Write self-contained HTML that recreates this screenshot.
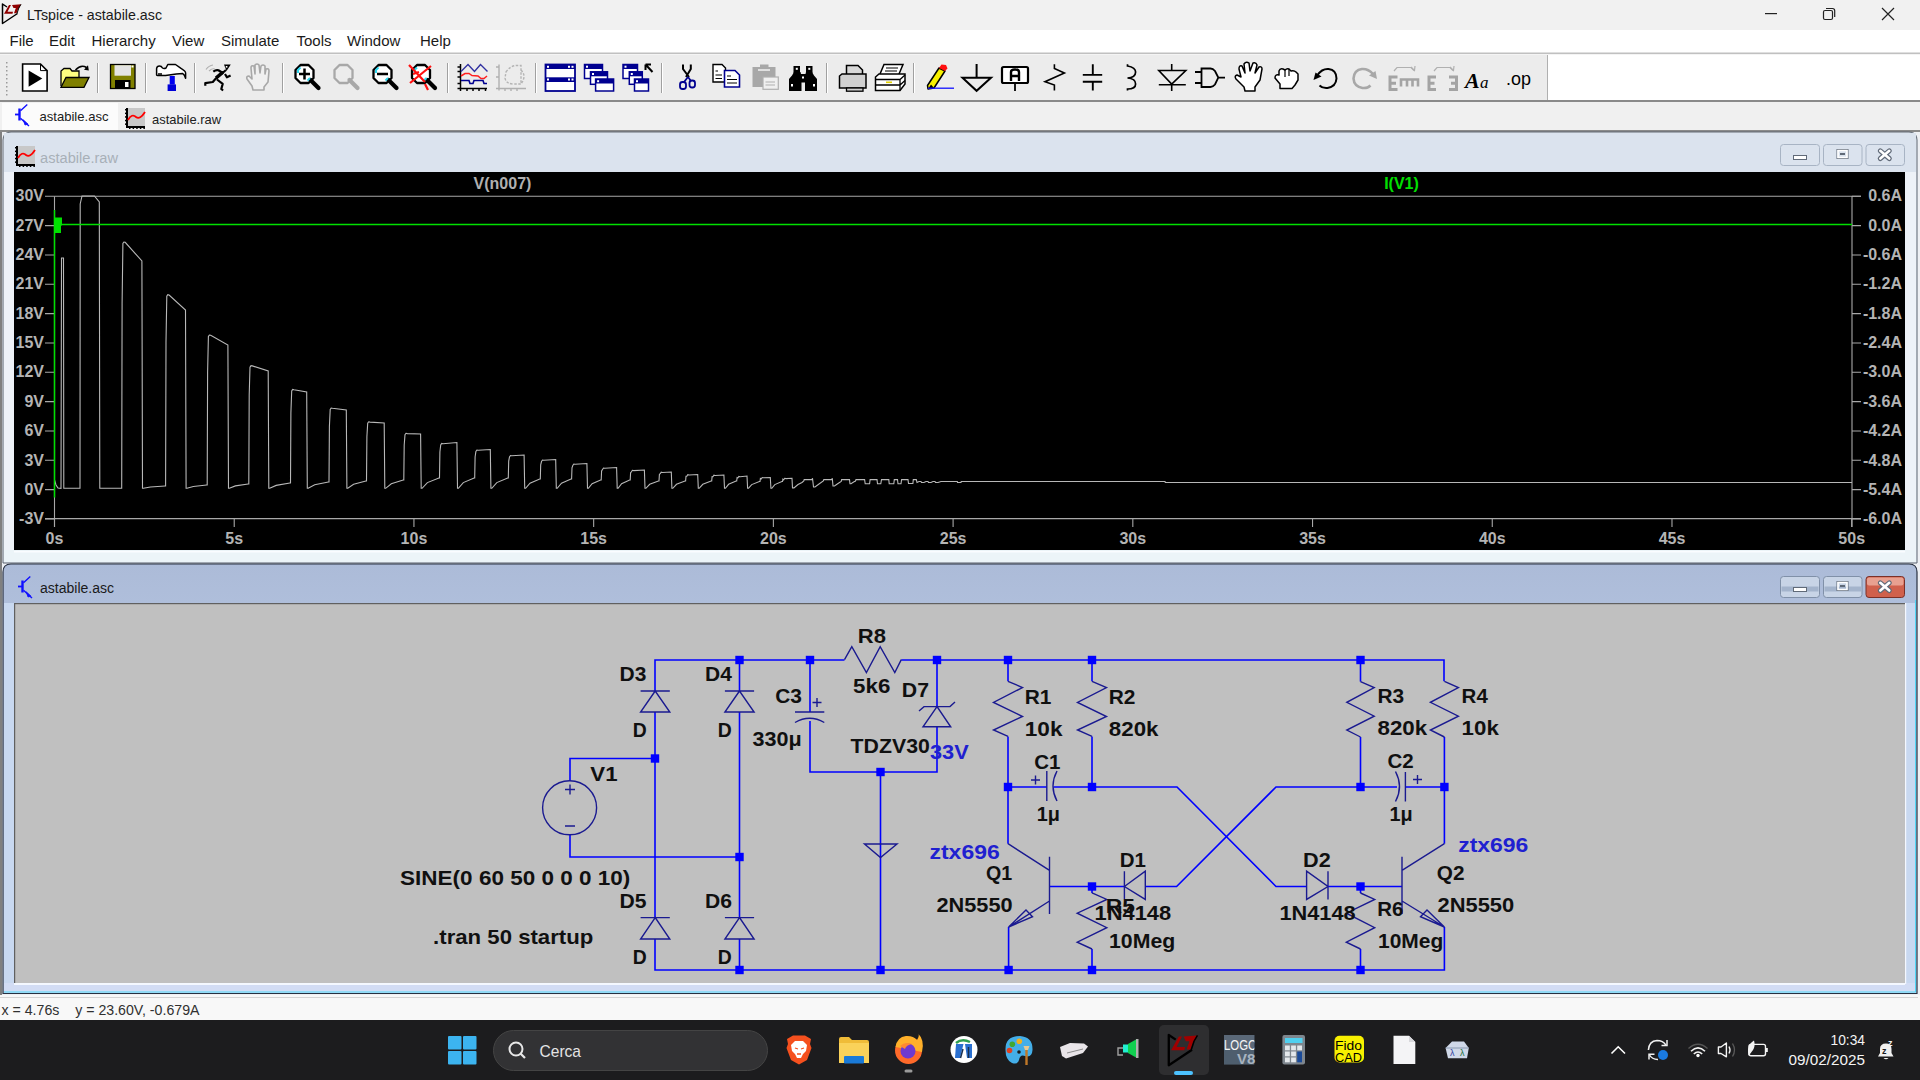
<!DOCTYPE html>
<html><head><meta charset="utf-8"><title>LTspice - astabile.asc</title>
<style>html,body{margin:0;padding:0;background:#1c1c1e;overflow:hidden}svg{display:block}text{font-family:"Liberation Sans", sans-serif;white-space:pre}</style></head>
<body><svg width="1920" height="1080" viewBox="0 0 1920 1080" font-family='"Liberation Sans", sans-serif'>
<rect x="0" y="0" width="1920" height="30" fill="#f1f1f1"/>
<rect x="0" y="30" width="1920" height="23" fill="#ffffff"/>
<rect x="0" y="52.5" width="1920" height="1.6" fill="#c0c0c0"/><rect x="0" y="54" width="1920" height="1" fill="#f4f4f4"/>
<rect x="0" y="55" width="1548" height="46" fill="#ececec"/>
<rect x="1548" y="55" width="372" height="46" fill="#ffffff"/>
<rect x="1547" y="55" width="1" height="46" fill="#b0b0b0"/>
<rect x="0" y="100" width="1920" height="2" fill="#8a8a8a"/>
<rect x="0" y="102" width="1920" height="29" fill="#f0f0f0"/>
<rect x="2" y="103" width="116" height="28" fill="#fbfbfb"/>
<rect x="0" y="131" width="1920" height="865" fill="#eef0f4"/>
<rect x="0" y="131" width="2" height="865" fill="#808080"/>
<rect x="0" y="130" width="1920" height="2" fill="#8a8a8a"/>
<g><path d="M7,7 L2.5,4 L2.5,23.5 L17.5,13.5" fill="none" stroke="#000" stroke-width="1.5" stroke-linejoin="round"/><path d="M9,5 L11,5 L7.5,11.8 L13,11.8 L12.5,13.8 L4,13.8 Z" fill="#900000"/><path d="M12,5 L21,4.3 L19.3,7.8 L18.5,8 L16.5,13.3 L14,13.3 L15.8,8 L13.5,8 Z" fill="#900000"/><path d="M21,4.3 L18.8,8 L17,13.5" fill="none" stroke="#000" stroke-width="1"/></g>
<text x="27" y="20" font-size="15" fill="#1a1a1a" font-weight="400" text-anchor="start" textLength="135" lengthAdjust="spacingAndGlyphs" >LTspice - astabile.asc</text>
<rect x="1765" y="13" width="12" height="1.2" fill="#222"/>
<rect x="1823.5" y="10.5" width="9" height="9" rx="1.5" fill="none" stroke="#222" stroke-width="1.2"/><path d="M1826,8.5 L1832.5,8.5 Q1834.7,8.5 1834.7,10.7 L1834.7,17" fill="none" stroke="#222" stroke-width="1.2"/>
<path d="M1882,8 L1894,20 M1894,8 L1882,20" stroke="#222" stroke-width="1.2"/>
<text x="9.5" y="45.8" font-size="15" fill="#1a1a1a" font-weight="400" text-anchor="start" >File</text>
<text x="49" y="45.8" font-size="15" fill="#1a1a1a" font-weight="400" text-anchor="start" >Edit</text>
<text x="91.5" y="45.8" font-size="15" fill="#1a1a1a" font-weight="400" text-anchor="start" >Hierarchy</text>
<text x="172" y="45.8" font-size="15" fill="#1a1a1a" font-weight="400" text-anchor="start" >View</text>
<text x="221" y="45.8" font-size="15" fill="#1a1a1a" font-weight="400" text-anchor="start" >Simulate</text>
<text x="296.5" y="45.8" font-size="15" fill="#1a1a1a" font-weight="400" text-anchor="start" >Tools</text>
<text x="347" y="45.8" font-size="15" fill="#1a1a1a" font-weight="400" text-anchor="start" >Window</text>
<text x="420" y="45.8" font-size="15" fill="#1a1a1a" font-weight="400" text-anchor="start" >Help</text>
<g><rect x="6" y="62" width="1.5" height="1.5" fill="#9a9a9a"/><rect x="6" y="66" width="1.5" height="1.5" fill="#9a9a9a"/><rect x="6" y="70" width="1.5" height="1.5" fill="#9a9a9a"/><rect x="6" y="74" width="1.5" height="1.5" fill="#9a9a9a"/><rect x="6" y="78" width="1.5" height="1.5" fill="#9a9a9a"/><rect x="6" y="82" width="1.5" height="1.5" fill="#9a9a9a"/><rect x="6" y="86" width="1.5" height="1.5" fill="#9a9a9a"/><rect x="6" y="90" width="1.5" height="1.5" fill="#9a9a9a"/><rect x="6" y="94" width="1.5" height="1.5" fill="#9a9a9a"/><rect x="97" y="63" width="1" height="30" fill="#a0a0a0"/><rect x="98" y="63" width="1" height="30" fill="#fff"/><rect x="145" y="63" width="1" height="30" fill="#a0a0a0"/><rect x="146" y="63" width="1" height="30" fill="#fff"/><rect x="194" y="63" width="1" height="30" fill="#a0a0a0"/><rect x="195" y="63" width="1" height="30" fill="#fff"/><rect x="282" y="63" width="1" height="30" fill="#a0a0a0"/><rect x="283" y="63" width="1" height="30" fill="#fff"/><rect x="447" y="63" width="1" height="30" fill="#a0a0a0"/><rect x="448" y="63" width="1" height="30" fill="#fff"/><rect x="535" y="63" width="1" height="30" fill="#a0a0a0"/><rect x="536" y="63" width="1" height="30" fill="#fff"/><rect x="661" y="63" width="1" height="30" fill="#a0a0a0"/><rect x="662" y="63" width="1" height="30" fill="#fff"/><rect x="826" y="63" width="1" height="30" fill="#a0a0a0"/><rect x="827" y="63" width="1" height="30" fill="#fff"/><rect x="913" y="63" width="1" height="30" fill="#a0a0a0"/><rect x="914" y="63" width="1" height="30" fill="#fff"/><path d="M22.6,64 L40.5,64 L47.1,70.6 L47.1,91 L22.6,91 Z" fill="#fff" stroke="#000" stroke-width="1.6"/><path d="M40.5,64 L40.5,70.6 L47.1,70.6" fill="none" stroke="#000" stroke-width="1"/><path d="M28.6,70.6 L28.6,86.7 L42.3,78.6 Z" fill="#000"/><path d="M61,86 L61,71 L64,68.5 L70,68.5 L72,71 L79,71 L79,77" fill="#ffff80" stroke="#000" stroke-width="1.3"/><path d="M61,87.3 L66,77.5 L89,77.5 L84,87.3 Z" fill="#808000" stroke="#000" stroke-width="1.3"/><path d="M75.5,70 Q81,64 86.5,67.5" fill="none" stroke="#000" stroke-width="1.6"/><path d="M84,69.8 L88.8,70.5 L88,65.2 Z" fill="#000"/><rect x="110.5" y="64.5" width="24.5" height="24" fill="#808000" stroke="#000" stroke-width="1.3"/><rect x="114.5" y="65.2" width="16.5" height="10.5" fill="#e4e4e4"/><rect x="131.5" y="65.5" width="2" height="2" fill="#fff"/><rect x="115" y="80" width="15.5" height="8.5" fill="#000"/><rect x="125" y="82" width="3.5" height="5" fill="#fff"/><path d="M156.6,75 L156.6,68.5 Q157,66 159.4,66 Q161.5,66 162.5,68 Q164,69 166,68 L167.8,64.5 L175.5,64.5 L181,68.4 Q185.6,71 185.6,73 L185.6,78.3 Q184.5,74.5 182.8,73.6 L176.3,74 L165.5,75.5 L159,75.5 Q156.6,75.5 156.6,75 Z" fill="#fff" stroke="#000" stroke-width="1.5" stroke-linejoin="round"/><path d="M158,74 L162,74" stroke="#000" stroke-width="1.5"/><rect x="169.7" y="76" width="5.1" height="8.6" fill="#0000f0"/><rect x="167.6" y="84.4" width="8.4" height="6.6" fill="#0000d8"/><path d="M224,64.5 L230.8,64.5 L226.5,71 Z" fill="#000"/><rect x="225.8" y="66" width="1.6" height="1.6" fill="#fff"/><path d="M226,70 L215.6,78.8 M213.3,71.7 Q216,69.5 218.4,70.3 L223.5,73.5 M225,74 L226.9,77.3 L230.6,75.5 M215.6,78.8 L212.8,82 L205.3,83.2 L205.3,85.8 M217,79.5 L222.7,83.9 L221.3,89 L223.1,90.5" stroke="#000" stroke-width="2.2" fill="none" stroke-linejoin="round"/><path d="M216,78 L223,72" stroke="#000" stroke-width="3.5"/><path d="M206,69.5 Q209,65.5 213,65 M209,71 Q211.5,68.5 214.5,68.5" stroke="#b0b0b0" stroke-width="1.2" fill="none"/><path d="M253,90 L252,86 L247,79 Q246,76 249,76 L252,79 L251,68 Q251,65 254,66 L255,74 L255,65 Q257,63 259,65 L260,73 L261,66 Q263,64 265,66 L265,74 L266,69 Q269,68 269,71 L268,82 L264,87 L264,90 Z" fill="#f0f0f0" stroke="#a8a8a8" stroke-width="1.6" stroke-linejoin="round"/><path d="M300.5,65 L308.5,65 L313.5,70 L313.5,78 L308.5,83 L300.5,83 L295.5,78 L295.5,70 Z" fill="#fff" stroke="#000" stroke-width="2.3" stroke-linejoin="round"/><path d="M310.5,80 L318.5,88" stroke="#000" stroke-width="4.2" stroke-linecap="round"/><path d="M298.0,73 L298.0,70 L300.5,67.5" stroke="#30d8f0" stroke-width="2" fill="none"/><path d="M307.5,80.5 L310.0,78" stroke="#30d8f0" stroke-width="2"/><path d="M299,74 L310,74 M304.5,68.5 L304.5,79.5" stroke="#000" stroke-width="2.5"/><path d="M339.5,65 L347.5,65 L352.5,70 L352.5,78 L347.5,83 L339.5,83 L334.5,78 L334.5,70 Z" fill="#ececec" stroke="#a8a8a8" stroke-width="2.3" stroke-linejoin="round"/><path d="M349.5,80 L357.5,88" stroke="#a8a8a8" stroke-width="4.2" stroke-linecap="round"/><path d="M378.5,65 L386.5,65 L391.5,70 L391.5,78 L386.5,83 L378.5,83 L373.5,78 L373.5,70 Z" fill="#fff" stroke="#000" stroke-width="2.3" stroke-linejoin="round"/><path d="M388.5,80 L396.5,88" stroke="#000" stroke-width="4.2" stroke-linecap="round"/><path d="M376.0,73 L376.0,70 L378.5,67.5" stroke="#30d8f0" stroke-width="2" fill="none"/><path d="M385.5,80.5 L388.0,78" stroke="#30d8f0" stroke-width="2"/><path d="M377,74 L388,74" stroke="#000" stroke-width="2.5"/><path d="M417,65 L425,65 L430,70 L430,78 L425,83 L417,83 L412,78 L412,70 Z" fill="#fff" stroke="#000" stroke-width="2.3" stroke-linejoin="round"/><path d="M427,80 L435,88" stroke="#000" stroke-width="4.2" stroke-linecap="round"/><path d="M414.5,73 L414.5,70 L417,67.5" stroke="#30d8f0" stroke-width="2" fill="none"/><path d="M424,80.5 L426.5,78" stroke="#30d8f0" stroke-width="2"/><path d="M409,65 L425,82 M431,66 L410,83 M413,74 L419,72 M425,84 L428,90" stroke="#ff1010" stroke-width="2.2"/><path d="M460.5,64 L460.5,91 M457.5,88.5 L487,88.5 M457.5,67 L460.5,67 M457.5,71.5 L460.5,71.5 M457.5,77 L460.5,77 M457.5,83.5 L460.5,83.5 M467,88.5 L467,91 M473,88.5 L473,91 M479,88.5 L479,91 M485.5,88.5 L485.5,91" fill="none" stroke="#000" stroke-width="1.5"/><path d="M461,71.5 L468,64.5 L474.5,71.5 L480.5,64.5 L487.5,71.5" fill="none" stroke="#3030a0" stroke-width="1.4"/><path d="M461,76 L465,73.5 L469,73.5 L472,75.5 L478,76 L481,78.5 L484,78.5 L487,76" fill="none" stroke="#ff2020" stroke-width="1.5"/><path d="M461,80.5 L469,80.5 L470,83.5 L473,83.5 L474,80.5 L483,80.5 L484,83.5 L487,83.5" fill="none" stroke="#000090" stroke-width="1.6"/><path d="M499,64.5 L499,90.5 M496,88.5 L526,88.5 M496,67 L499,67 M496,77 L499,77 M505,88.5 L505,91 M511,88.5 L511,91 M517,88.5 L517,91" fill="none" stroke="#b0b0b0" stroke-width="1.4"/><path d="M506,72 Q510,66 516,65.5 L521,65.5 L521,84 L514,84 Q506,84 505,78 Z M521,70 Q527,76 521,84" fill="none" stroke="#b4b4b4" stroke-width="1.4" stroke-dasharray="2.5,1.5"/><rect x="545.5" y="64.5" width="29.5" height="26.5" fill="#fff" stroke="#000090" stroke-width="1.8"/><rect x="545.5" y="64.5" width="29.5" height="4.5" fill="#000090"/><rect x="545.5" y="77.3" width="29.5" height="4.7" fill="#000090"/><rect x="547" y="65.8" width="2" height="2" fill="#fff"/><rect x="568" y="65.8" width="2" height="2" fill="#fff"/><rect x="571.5" y="65.8" width="2" height="2" fill="#fff"/><rect x="547" y="78.5" width="2" height="2" fill="#fff"/><rect x="568" y="78.5" width="2" height="2" fill="#fff"/><rect x="571.5" y="78.5" width="2" height="2" fill="#fff"/><rect x="584.5" y="64.5" width="18" height="14" fill="#fff" stroke="#000090" stroke-width="1.5"/><rect x="584.5" y="64.5" width="18" height="4.5" fill="#000090"/><rect x="586.0" y="65.7" width="2" height="2" fill="#fff"/><rect x="590.5" y="71.8" width="17" height="12.5" fill="#fff" stroke="#000090" stroke-width="1.5"/><rect x="590.5" y="71.8" width="17" height="4.5" fill="#000090"/><rect x="592.0" y="73.0" width="2" height="2" fill="#fff"/><rect x="595.6" y="79" width="18" height="12" fill="#fff" stroke="#000090" stroke-width="1.5"/><rect x="595.6" y="79" width="18" height="4.5" fill="#000090"/><rect x="597.1" y="80.2" width="2" height="2" fill="#fff"/><rect x="623" y="64.5" width="14.5" height="14" fill="#fff" stroke="#000090" stroke-width="1.5"/><rect x="623" y="64.5" width="14.5" height="4.5" fill="#000090"/><rect x="624.5" y="65.7" width="2" height="2" fill="#fff"/><rect x="629.3" y="71.8" width="13" height="12.5" fill="#fff" stroke="#000090" stroke-width="1.5"/><rect x="629.3" y="71.8" width="13" height="4.5" fill="#000090"/><rect x="630.8" y="73.0" width="2" height="2" fill="#fff"/><rect x="634.5" y="79" width="14" height="12" fill="#fff" stroke="#000090" stroke-width="1.5"/><rect x="634.5" y="79" width="14" height="4.5" fill="#000090"/><rect x="636.0" y="80.2" width="2" height="2" fill="#fff"/><path d="M646,65 L652.5,72 M645.5,64.5 L645.5,70 M645.5,64.5 L651,64.5" fill="none" stroke="#000" stroke-width="2"/><path d="M683,64.5 L683,69 L689,77 M690.8,64.5 L690.8,69 L686,77" stroke="#000" stroke-width="2" fill="none"/><path d="M688,77 L684,82 M688,77 L691,81" stroke="#000090" stroke-width="1.8"/><rect x="680" y="82" width="6" height="7" rx="2.5" fill="none" stroke="#000090" stroke-width="1.8"/><rect x="689.5" y="80.5" width="5.5" height="7" rx="2.5" fill="none" stroke="#000090" stroke-width="1.8"/><path d="M713,64.5 L722,64.5 L725.5,68 L725.5,82 L713,82 Z" fill="#fff" stroke="#000" stroke-width="1.4"/><path d="M715.5,71 L718,71 M715.5,75 L722,75 M715.5,78.5 L722,78.5" stroke="#000" stroke-width="1.1"/><path d="M724.5,70.5 L735,70.5 L739.5,75 L739.5,87 L724.5,87 Z" fill="#fff" stroke="#000090" stroke-width="1.6"/><path d="M727,76 L731,76 M727,79.5 L737,79.5 M727,83 L737,83" stroke="#000" stroke-width="1.1"/><rect x="752.5" y="67" width="23" height="20" fill="#a8a8a8"/><rect x="760" y="64.5" width="8.5" height="4" fill="#a8a8a8"/><rect x="758" y="69" width="12" height="2" fill="#e0e0e0"/><rect x="763" y="77" width="15.3" height="12.3" fill="#f0f0f0" stroke="#b0b0b0" stroke-width="1.2"/><path d="M765.5,82 L775,82 M765.5,85 L775,85" stroke="#b0b0b0" stroke-width="1"/><rect x="793.5" y="66" width="6.5" height="7" fill="#000"/><rect x="806" y="66" width="6.5" height="7" fill="#000"/><path d="M792,75.5 L794,72 L800.5,72 L801.5,76 L801.5,91 L789,91 L789,79 Z M805,76 L806,72 L812,72 L814,75.5 L817,79 L817,91 L805,91 Z" fill="#000"/><rect x="800" y="74" width="6" height="8.5" fill="#000"/><rect x="795.8" y="67.8" width="2" height="2" fill="#fff"/><rect x="808.3" y="67.8" width="2" height="2" fill="#fff"/><rect x="802" y="76.5" width="2" height="2" fill="#fff"/><rect x="791" y="84" width="2" height="2.5" fill="#fff"/><rect x="813" y="84" width="2" height="2.5" fill="#fff"/><path d="M846.5,74 L846.5,65.5 L858,65.5 L862.5,70 L862.5,74" fill="#d8d8d8" stroke="#000" stroke-width="1.5"/><path d="M839.5,88 L839.5,76 L842,74 L866,74 L866,88 Z" fill="#d0d0d0" stroke="#000" stroke-width="1.5"/><rect x="846.5" y="88" width="16.5" height="3.2" fill="#d0d0d0" stroke="#000" stroke-width="1.3"/><path d="M880,74 L884,64.5 L903,64.5 L899,74" fill="#fff" stroke="#000" stroke-width="1.5"/><path d="M886,68 L898,68 M885,71 L897,71" stroke="#000" stroke-width="1.2"/><path d="M875.5,90.5 L875.5,77 L879,74 L905,74 L905,84 L900,90.5 Z" fill="#fff" stroke="#000" stroke-width="1.5"/><path d="M875.5,79.5 L900,79.5 L905,75 M875.5,85 L900,85 L905,80.5 M900,79.5 L900,90.5" fill="none" stroke="#000" stroke-width="1.3"/><rect x="886" y="81.5" width="6" height="1.6" fill="#e0d000"/><path d="M927.5,85.5 L939,68 L945,71 L934,88 L928,89 Z" fill="#f8f000" stroke="#000" stroke-width="1.5" stroke-linejoin="round"/><path d="M939,68 L941.5,64.5 L946,65 L947.5,68.5 L945,71 Z" fill="#ff1010"/><path d="M928,89 L931,84.5 L934,88 Z" fill="#000"/><path d="M928,88.2 L954,88.2" stroke="#1010ff" stroke-width="1.3"/><path d="M976.6,64 L976.6,77.7 M962.5,77.7 L991,77.7 L976.6,90.8 Z" fill="none" stroke="#000" stroke-width="2"/><rect x="1002" y="67" width="26" height="16" rx="1.5" fill="#fff" stroke="#000" stroke-width="2.2"/><path d="M1015,83 L1015,91" stroke="#000" stroke-width="1.8"/><path d="M1011,81 L1011,72 Q1011,69.5 1015,69.5 Q1019,69.5 1019,72 L1019,81 M1011,76 L1019,76" fill="none" stroke="#000" stroke-width="2.4"/><path d="M1054.4,64.2 L1054.4,68.5 L1064.4,73 L1045,81.7 L1054.4,85 L1054.4,90.5" fill="none" stroke="#000" stroke-width="1.6"/><path d="M1092.8,64.2 L1092.8,74.9 M1082.8,74.9 L1102.2,74.9 M1082.8,81.7 L1102.2,81.7 M1092.8,81.7 L1092.8,90.5" fill="none" stroke="#000" stroke-width="1.9"/><path d="M1127.5,64.2 L1127.5,66 Q1135.6,67.5 1135.6,72 Q1135.6,77.5 1127.5,78 Q1135.6,78.5 1135.6,84 Q1135.6,89 1127.5,89 L1127.5,90.5" fill="none" stroke="#000" stroke-width="1.7"/><path d="M1171.7,64 L1171.7,70.5 M1171.7,84.7 L1171.7,91 M1158.8,84.7 L1185.8,84.7 M1158.8,70.5 L1185.8,70.5 L1171.7,84 Z" fill="none" stroke="#000" stroke-width="1.6"/><path d="M1201.5,68.5 L1210.5,68.5 Q1213,68.5 1215,71 L1218.3,77.6 L1215,84.5 Q1213,87 1210.5,87 L1201.5,87 Z M1195,72 L1201.5,72 M1195,83 L1201.5,83 M1218.3,77.6 L1225,77.6" fill="none" stroke="#000" stroke-width="1.8"/><path d="M1245,91 L1244,87 L1236,79 Q1234,76 1237,75 L1241,77 L1239,69 Q1239,65 1242,66 L1245,73 L1244,64 Q1246,61 1249,63 L1250,71 L1253,63 Q1256,62 1257,65 L1255,73 L1259,67 Q1262,66 1262,69 L1260,80 L1255,87 L1255,91 Z" fill="#fff" stroke="#000" stroke-width="1.5" stroke-linejoin="round"/><path d="M1280,88.5 L1280,84 L1275,78 Q1275,74 1279,75 L1279,71 Q1280,68 1283,69 L1285,70 Q1287,68 1289,69 L1291,71 Q1294,70 1296,72 L1298,74 L1298,80 L1295,85 L1292,88.5 Z" fill="#fff" stroke="#000" stroke-width="1.5" stroke-linejoin="round"/><path d="M1285,70 L1285,77 M1289,69 L1289,76" stroke="#000" stroke-width="1.2"/><path d="M1317.5,75 Q1322,68.5 1328.5,69 Q1336.5,70 1336.5,78.5 Q1336,86.5 1327.5,88 Q1322.5,88.5 1319.5,85.5" fill="none" stroke="#000" stroke-width="2"/><path d="M1313.5,80 L1315.5,72.5 L1321.5,76.5 Z" fill="#000"/><path d="M1373,74 Q1368,68.5 1362,69 Q1354,70 1353.5,78.5 Q1354,86.5 1362.5,88 Q1367.5,88.5 1370.5,85.5" fill="none" stroke="#a8a8a8" stroke-width="2.6"/><path d="M1377,79 L1375.5,71 L1369,75.5 Z" fill="#a8a8a8"/><path d="M1397.5,77 L1390,77 L1390,89.5 L1397.5,89.5 M1390,83.2 L1396,83.2" fill="none" stroke="#a4a4a4" stroke-width="3"/><path d="M1401,86.5 L1401,79.5 L1418,79.5 L1418,86.5 M1407,79.5 L1407,86.5 M1412.5,79.5 L1412.5,86.5" fill="none" stroke="#a4a4a4" stroke-width="2.6"/><path d="M1394,71 L1397,67.5 L1411,67.5 L1414,70.5" fill="none" stroke="#b0b0b0" stroke-width="1.2"/><path d="M1411,67 L1414.5,70.5 L1415,66" fill="none" stroke="#b0b0b0" stroke-width="1.2"/><path d="M1436,77 L1429,77 L1429,89.5 L1436,89.5 M1429,83.2 L1434.5,83.2" fill="none" stroke="#a4a4a4" stroke-width="3"/><path d="M1449,77 L1456.5,77 L1456.5,89.5 L1449,89.5 M1456.5,83.2 L1451,83.2" fill="none" stroke="#a4a4a4" stroke-width="3"/><path d="M1434,71 L1437,67.5 L1450,67.5 L1453,70.5" fill="none" stroke="#b0b0b0" stroke-width="1.2"/><path d="M1450,67 L1453.5,70.5 L1454,66" fill="none" stroke="#b0b0b0" stroke-width="1.2"/><text x="1465" y="87.5" font-size="22" font-weight="700" font-style="italic" fill="#000" style="font-family:'Liberation Serif',serif">A</text><text x="1480" y="87.5" font-size="17" font-style="italic" fill="#000" style="font-family:'Liberation Serif',serif">a</text><text x="1506" y="85" font-size="18" fill="#000" textLength="25" lengthAdjust="spacingAndGlyphs">.op</text></g>
<rect x="18.3" y="108.5" width="2.4" height="12" fill="#1010ff"/><path d="M15,114.5 L19,114.5" stroke="#1010ff" stroke-width="1.8"/><path d="M20.5,110.8 L27.3,104.5 M20.5,118.2 L29,126" stroke="#1010ff" stroke-width="1.4" fill="none"/><path d="M23.2,119.8 L28,124.2 L25,125 Z" fill="#1010ff" stroke="#1010ff" stroke-width="0.8"/>
<text x="39.5" y="121" font-size="13" fill="#202020" font-weight="400" text-anchor="start" textLength="69" lengthAdjust="spacingAndGlyphs" >astabile.asc</text>
<rect x="127" y="108" width="18" height="18" fill="#c8c8c8"/><path d="M127,108 L127,127 L145,127" stroke="#000" stroke-width="2" fill="none"/><rect x="125" y="109.0" width="2" height="1.5" fill="#000"/><rect x="129.0" y="127" width="1.5" height="2" fill="#000"/><rect x="125" y="112.6" width="2" height="1.5" fill="#000"/><rect x="132.6" y="127" width="1.5" height="2" fill="#000"/><rect x="125" y="116.2" width="2" height="1.5" fill="#000"/><rect x="136.2" y="127" width="1.5" height="2" fill="#000"/><rect x="125" y="119.8" width="2" height="1.5" fill="#000"/><rect x="139.8" y="127" width="1.5" height="2" fill="#000"/><rect x="125" y="123.4" width="2" height="1.5" fill="#000"/><rect x="143.4" y="127" width="1.5" height="2" fill="#000"/><path d="M128,120 Q132,113 136,117 Q140,120 145,112" stroke="#ff0000" stroke-width="1.8" fill="none"/>
<text x="152" y="123.5" font-size="13" fill="#202020" font-weight="400" text-anchor="start" textLength="69" lengthAdjust="spacingAndGlyphs" >astabile.raw</text>
<path d="M3,140 Q3,132 11,132 L1909,132 Q1917,132 1917,140 L1917,563 L3,563 Z" fill="#e6ecf3" stroke="#5c6470" stroke-width="1"/>
<rect x="4" y="133" width="1912" height="39" fill="#dbe3ee"/>
<rect x="4" y="550" width="1912" height="12" fill="#ecf4f8"/><rect x="14" y="551" width="1891" height="1.5" fill="#fafcff"/>
<rect x="4" y="172" width="10" height="378" fill="#eef2f8"/><rect x="1905" y="172" width="11" height="378" fill="#eef2f8"/>
<rect x="17" y="146" width="18" height="18" fill="#c8c8c8"/><path d="M17,146 L17,165 L35,165" stroke="#000" stroke-width="2" fill="none"/><rect x="15" y="147.0" width="2" height="1.5" fill="#000"/><rect x="19.0" y="165" width="1.5" height="2" fill="#000"/><rect x="15" y="150.6" width="2" height="1.5" fill="#000"/><rect x="22.6" y="165" width="1.5" height="2" fill="#000"/><rect x="15" y="154.2" width="2" height="1.5" fill="#000"/><rect x="26.2" y="165" width="1.5" height="2" fill="#000"/><rect x="15" y="157.8" width="2" height="1.5" fill="#000"/><rect x="29.8" y="165" width="1.5" height="2" fill="#000"/><rect x="15" y="161.4" width="2" height="1.5" fill="#000"/><rect x="33.4" y="165" width="1.5" height="2" fill="#000"/><path d="M18,158 Q22,151 26,155 Q30,158 35,150" stroke="#ff0000" stroke-width="1.8" fill="none"/>
<text x="40" y="162.5" font-size="14" fill="#a8b0b8" font-weight="400" text-anchor="start" textLength="78" lengthAdjust="spacingAndGlyphs" >astabile.raw</text>
<rect x="1780.5" y="144.5" width="39.0" height="21" rx="3" fill="#dbe3ee" stroke="#a8b4c4" stroke-width="1"/><rect x="1823.5" y="144.5" width="38.5" height="21" rx="3" fill="#dbe3ee" stroke="#a8b4c4" stroke-width="1"/><rect x="1866" y="144.5" width="38.5" height="21" rx="3" fill="#dbe3ee" stroke="#a8b4c4" stroke-width="1"/><rect x="1793.5" y="155.5" width="13" height="4" fill="#ffffff" stroke="#606a78" stroke-width="1"/><rect x="1837.0" y="149.5" width="11" height="9" fill="none" stroke="#606a78" stroke-width="1"/><rect x="1838.0" y="150.5" width="9" height="7" fill="none" stroke="#ffffff" stroke-width="1.6"/><rect x="1840.0" y="153.0" width="5" height="2" fill="#606a78"/><path d="M1880.3,150.8 L1889.3,158.5 M1889.3,150.8 L1880.3,158.5" stroke="#606a78" stroke-width="5" stroke-linecap="round"/><path d="M1880.3,150.8 L1889.3,158.5 M1889.3,150.8 L1880.3,158.5" stroke="#ffffff" stroke-width="2.6" stroke-linecap="round"/>
<rect x="14" y="172" width="1891" height="378" fill="#000"/>
<g><path d="M54.5,196.25 L1861,196.25 M1852,196.25 L1852,527 M54.5,196.25 L54.5,527 M45,518.6 L1861,518.6" stroke="#a8a8a8" stroke-width="1.1" fill="none"/><path d="M45,196.25 L54.5,196.25 M1852,196.25 L1861,196.25" stroke="#a8a8a8" stroke-width="1.1"/><text x="44" y="201.45" font-size="16" fill="#b4b4b4" font-weight="700" text-anchor="end" >30V</text><text x="1902" y="201.45" font-size="16" fill="#b4b4b4" font-weight="700" text-anchor="end" >0.6A</text><path d="M45,225.59 L54.5,225.59 M1852,225.59 L1861,225.59" stroke="#a8a8a8" stroke-width="1.1"/><text x="44" y="230.79" font-size="16" fill="#b4b4b4" font-weight="700" text-anchor="end" >27V</text><text x="1902" y="230.79" font-size="16" fill="#b4b4b4" font-weight="700" text-anchor="end" >0.0A</text><path d="M45,254.93 L54.5,254.93 M1852,254.93 L1861,254.93" stroke="#a8a8a8" stroke-width="1.1"/><text x="44" y="260.13" font-size="16" fill="#b4b4b4" font-weight="700" text-anchor="end" >24V</text><text x="1902" y="260.13" font-size="16" fill="#b4b4b4" font-weight="700" text-anchor="end" >-0.6A</text><path d="M45,284.27 L54.5,284.27 M1852,284.27 L1861,284.27" stroke="#a8a8a8" stroke-width="1.1"/><text x="44" y="289.46999999999997" font-size="16" fill="#b4b4b4" font-weight="700" text-anchor="end" >21V</text><text x="1902" y="289.46999999999997" font-size="16" fill="#b4b4b4" font-weight="700" text-anchor="end" >-1.2A</text><path d="M45,313.61 L54.5,313.61 M1852,313.61 L1861,313.61" stroke="#a8a8a8" stroke-width="1.1"/><text x="44" y="318.81" font-size="16" fill="#b4b4b4" font-weight="700" text-anchor="end" >18V</text><text x="1902" y="318.81" font-size="16" fill="#b4b4b4" font-weight="700" text-anchor="end" >-1.8A</text><path d="M45,342.95 L54.5,342.95 M1852,342.95 L1861,342.95" stroke="#a8a8a8" stroke-width="1.1"/><text x="44" y="348.15" font-size="16" fill="#b4b4b4" font-weight="700" text-anchor="end" >15V</text><text x="1902" y="348.15" font-size="16" fill="#b4b4b4" font-weight="700" text-anchor="end" >-2.4A</text><path d="M45,372.29 L54.5,372.29 M1852,372.29 L1861,372.29" stroke="#a8a8a8" stroke-width="1.1"/><text x="44" y="377.48999999999995" font-size="16" fill="#b4b4b4" font-weight="700" text-anchor="end" >12V</text><text x="1902" y="377.48999999999995" font-size="16" fill="#b4b4b4" font-weight="700" text-anchor="end" >-3.0A</text><path d="M45,401.63 L54.5,401.63 M1852,401.63 L1861,401.63" stroke="#a8a8a8" stroke-width="1.1"/><text x="44" y="406.83" font-size="16" fill="#b4b4b4" font-weight="700" text-anchor="end" >9V</text><text x="1902" y="406.83" font-size="16" fill="#b4b4b4" font-weight="700" text-anchor="end" >-3.6A</text><path d="M45,430.97 L54.5,430.97 M1852,430.97 L1861,430.97" stroke="#a8a8a8" stroke-width="1.1"/><text x="44" y="436.17" font-size="16" fill="#b4b4b4" font-weight="700" text-anchor="end" >6V</text><text x="1902" y="436.17" font-size="16" fill="#b4b4b4" font-weight="700" text-anchor="end" >-4.2A</text><path d="M45,460.31 L54.5,460.31 M1852,460.31 L1861,460.31" stroke="#a8a8a8" stroke-width="1.1"/><text x="44" y="465.51" font-size="16" fill="#b4b4b4" font-weight="700" text-anchor="end" >3V</text><text x="1902" y="465.51" font-size="16" fill="#b4b4b4" font-weight="700" text-anchor="end" >-4.8A</text><path d="M45,489.65 L54.5,489.65 M1852,489.65 L1861,489.65" stroke="#a8a8a8" stroke-width="1.1"/><text x="44" y="494.84999999999997" font-size="16" fill="#b4b4b4" font-weight="700" text-anchor="end" >0V</text><text x="1902" y="494.84999999999997" font-size="16" fill="#b4b4b4" font-weight="700" text-anchor="end" >-5.4A</text><path d="M45,518.99 L54.5,518.99 M1852,518.99 L1861,518.99" stroke="#a8a8a8" stroke-width="1.1"/><text x="44" y="524.19" font-size="16" fill="#b4b4b4" font-weight="700" text-anchor="end" >-3V</text><text x="1902" y="524.19" font-size="16" fill="#b4b4b4" font-weight="700" text-anchor="end" >-6.0A</text><path d="M54.50,518.6 L54.50,527" stroke="#a8a8a8" stroke-width="1.1"/><text x="54.5" y="544" font-size="16" fill="#b4b4b4" font-weight="700" text-anchor="middle" >0s</text><path d="M234.22,518.6 L234.22,527" stroke="#a8a8a8" stroke-width="1.1"/><text x="234.22" y="544" font-size="16" fill="#b4b4b4" font-weight="700" text-anchor="middle" >5s</text><path d="M413.94,518.6 L413.94,527" stroke="#a8a8a8" stroke-width="1.1"/><text x="413.94" y="544" font-size="16" fill="#b4b4b4" font-weight="700" text-anchor="middle" >10s</text><path d="M593.66,518.6 L593.66,527" stroke="#a8a8a8" stroke-width="1.1"/><text x="593.66" y="544" font-size="16" fill="#b4b4b4" font-weight="700" text-anchor="middle" >15s</text><path d="M773.38,518.6 L773.38,527" stroke="#a8a8a8" stroke-width="1.1"/><text x="773.38" y="544" font-size="16" fill="#b4b4b4" font-weight="700" text-anchor="middle" >20s</text><path d="M953.10,518.6 L953.10,527" stroke="#a8a8a8" stroke-width="1.1"/><text x="953.1" y="544" font-size="16" fill="#b4b4b4" font-weight="700" text-anchor="middle" >25s</text><path d="M1132.82,518.6 L1132.82,527" stroke="#a8a8a8" stroke-width="1.1"/><text x="1132.82" y="544" font-size="16" fill="#b4b4b4" font-weight="700" text-anchor="middle" >30s</text><path d="M1312.54,518.6 L1312.54,527" stroke="#a8a8a8" stroke-width="1.1"/><text x="1312.54" y="544" font-size="16" fill="#b4b4b4" font-weight="700" text-anchor="middle" >35s</text><path d="M1492.26,518.6 L1492.26,527" stroke="#a8a8a8" stroke-width="1.1"/><text x="1492.26" y="544" font-size="16" fill="#b4b4b4" font-weight="700" text-anchor="middle" >40s</text><path d="M1671.98,518.6 L1671.98,527" stroke="#a8a8a8" stroke-width="1.1"/><text x="1671.98" y="544" font-size="16" fill="#b4b4b4" font-weight="700" text-anchor="middle" >45s</text><path d="M1851.70,518.6 L1851.70,527" stroke="#a8a8a8" stroke-width="1.1"/><text x="1851.7" y="544" font-size="16" fill="#b4b4b4" font-weight="700" text-anchor="middle" >50s</text><text x="502.5" y="189" font-size="16" fill="#b0b0b0" font-weight="700" text-anchor="middle" >V(n007)</text><text x="1401.5" y="189" font-size="16" fill="#00e000" font-weight="700" text-anchor="middle" >I(V1)</text><polyline points="54.5,480.0 56.0,485.0 58.0,488.0 61.0,488.3 61.5,258.0 63.5,258.0 63.8,488.3 80.0,488.3 80.2,204.0 82.0,196.0 94.4,196.0 99.3,202.0 99.8,488.3 121.2,488.3 121.7,488.3 122.1,303.6 122.9,243.5 123.9,242.0 125.2,242.3 141.9,261.0 142.5,488.3 143.4,488.3 150.4,487.0 165.0,486.0 165.6,486.0 166.0,342.5 166.8,296.2 167.8,294.7 169.1,295.0 185.5,310.0 186.1,488.3 187.0,488.3 193.3,486.5 206.6,485.0 207.2,485.0 207.6,372.5 208.4,336.5 209.4,335.0 210.7,335.3 227.9,345.0 228.5,488.3 229.4,488.3 235.4,485.9 248.2,484.0 248.8,484.0 249.2,395.2 250.0,367.1 251.0,365.6 252.3,365.9 268.2,371.0 268.8,488.3 269.7,488.3 276.2,485.4 289.9,483.0 290.5,483.0 290.9,412.8 291.7,390.9 292.7,389.4 294.0,389.7 306.7,392.0 307.3,488.3 308.2,488.3 314.7,484.8 328.4,482.0 329.0,482.0 329.4,426.5 330.2,409.5 331.2,408.0 332.5,408.3 346.3,410.0 346.9,488.3 347.8,488.3 353.6,484.3 365.9,481.0 366.5,481.0 366.9,436.6 367.7,423.3 368.7,421.8 370.0,422.1 384.2,423.0 384.8,488.3 385.7,488.3 391.3,483.7 403.2,480.0 403.8,480.0 404.2,445.0 405.0,434.8 406.0,433.3 407.3,433.6 420.6,434.0 421.2,488.3 422.1,488.3 427.4,482.6 438.9,478.0 439.5,478.0 439.9,452.0 440.7,444.9 441.7,443.4 443.0,443.7 456.9,442.5 457.5,488.3 458.4,488.3 463.3,482.6 474.1,478.0 474.7,478.0 475.1,457.0 475.9,451.5 476.9,450.0 478.2,450.3 490.3,449.5 490.9,488.3 491.8,488.3 496.8,482.6 507.7,478.0 508.3,478.0 508.7,461.1 509.5,457.0 510.5,455.5 511.8,455.8 524.1,455.0 524.7,488.3 525.6,488.3 530.0,483.2 539.7,479.0 540.3,479.0 540.7,464.8 541.5,461.5 542.5,460.0 543.8,460.3 555.7,459.5 556.3,488.3 557.2,488.3 561.5,483.2 571.0,479.0 571.6,479.0 572.0,467.8 572.8,465.5 573.8,464.0 575.1,464.3 586.9,463.5 587.5,488.3 588.4,488.3 592.1,483.7 600.6,480.0 601.2,480.0 601.6,471.0 602.5,469.5 603.5,468.0 604.8,468.3 616.6,467.5 617.2,488.3 618.1,488.3 621.6,483.7 629.6,480.0 630.2,480.0 630.6,472.7 631.4,471.8 632.4,470.3 633.7,470.6 644.4,470.0 645.0,488.3 645.9,488.3 649.7,484.3 658.4,481.0 659.0,481.0 659.4,474.4 660.2,473.7 661.2,472.2 662.5,472.5 671.3,472.0 671.9,488.3 672.8,488.3 676.5,484.3 685.0,481.0 685.6,481.0 686.0,476.3 686.8,476.2 687.8,474.7 689.1,475.0 697.7,474.5 698.3,488.3 699.2,488.3 702.8,484.3 711.1,481.0 711.7,481.0 712.1,476.6 712.9,476.7 713.9,475.2 715.2,475.5 723.9,475.0 724.5,488.3 725.4,488.3 728.6,484.3 736.1,481.0 736.7,481.0 737.1,477.5 737.9,477.9 738.9,476.4 740.2,476.7 747.0,476.0 747.6,488.3 748.5,488.3 751.7,484.6 759.4,481.5 760.0,481.5 760.4,478.5 761.2,479.0 762.2,477.5 763.5,477.8 770.3,477.5 770.9,488.3 771.8,488.3 774.8,484.6 781.9,481.5 782.5,481.5 782.9,479.1 783.7,479.8 784.7,478.3 786.0,478.6 792.0,478.3 792.5,487.9 794.0,487.9 798.0,484.5 802.0,482.5 803.8,481.0 804.2,479.6 812.0,479.6 812.5,478.3 813.5,487.0 815.0,487.0 819.0,484.0 823.3,481.0 823.8,479.6 831.8,479.6 832.3,478.3 833.0,486.0 834.5,486.0 838.0,483.5 841.2,481.5 841.6,479.6 849.5,479.6 850.0,483.8 851.0,483.8 854.0,481.8 855.5,481.0 856.0,479.6 864.6,479.6 865.2,483.8 869.6,483.8 870.1,479.6 877.0,479.6 877.5,483.8 880.8,483.8 881.5,479.6 888.8,479.6 889.2,483.8 893.8,483.8 894.3,479.6 897.5,479.6 898.0,483.8 901.0,483.8 901.6,479.6 908.0,479.6 908.5,483.5 912.9,483.5 913.3,479.6 916.3,479.6 917.0,482.5 919.0,481.5 921.0,481.5 921.5,482.5 924.0,482.5 926.0,481.5 928.0,481.5 928.5,482.5 931.0,482.5 933.0,481.5 935.0,481.5 935.5,482.5 938.0,482.5 941.0,481.5 957.3,481.5 957.5,482.5 961.0,482.5 961.2,481.5 1165.0,481.5 1165.3,482.5 1852.0,482.5" fill="none" stroke="#b8b8b8" stroke-width="1.1"/><path d="M54.5,210 L54.5,497.5" stroke="#00e000" stroke-width="1.5"/><path d="M54.5,224.5 L1852,224.5" stroke="#00e000" stroke-width="1.6"/><rect x="54" y="217.5" width="8" height="8" fill="#00e000"/><rect x="54" y="225" width="7" height="8" fill="#00e000"/></g>
<defs><linearGradient id="ag" x1="0" y1="0" x2="0" y2="1"><stop offset="0" stop-color="#acbbd8"/><stop offset="0.5" stop-color="#bccde8"/><stop offset="1" stop-color="#c8daf0"/></linearGradient></defs>
<path d="M3,572 Q3,564 11,564 L1909,564 Q1917,564 1917,572 L1917,993.5 L3,993.5 Z" fill="url(#ag)" stroke="#283040" stroke-width="1.2"/>
<rect x="4" y="982" width="1912" height="11" fill="#d2dcf4"/><rect x="4" y="603" width="10" height="380" fill="#c8d8f0"/><rect x="1905" y="603" width="11" height="380" fill="#c8d8f0"/><rect x="4" y="991.5" width="1912" height="1" fill="#50d8f8"/><rect x="1915" y="600" width="1" height="392" fill="#50d8f8"/><rect x="1905" y="603" width="1.2" height="381" fill="#f4f8ff"/>
<rect x="14" y="983" width="1891" height="2" fill="#f4f8ff"/>
<rect x="21.3" y="580.5" width="2.4" height="12" fill="#1010ff"/><path d="M18,586.5 L22,586.5" stroke="#1010ff" stroke-width="1.8"/><path d="M23.5,582.8 L30.3,576.5 M23.5,590.2 L32,598" stroke="#1010ff" stroke-width="1.4" fill="none"/><path d="M26.2,591.8 L31,596.2 L28,597 Z" fill="#1010ff" stroke="#1010ff" stroke-width="0.8"/>
<text x="40" y="593" font-size="14" fill="#1a1a1a" font-weight="400" text-anchor="start" textLength="74" lengthAdjust="spacingAndGlyphs" >astabile.asc</text>
<rect x="1780.5" y="576.5" width="39.0" height="21" rx="3" fill="#c8d4e6" stroke="#8090a8" stroke-width="1"/><rect x="1781.5" y="586.5" width="37.0" height="5" fill="#a4b4cc"/><rect x="1823.5" y="576.5" width="38.5" height="21" rx="3" fill="#c8d4e6" stroke="#8090a8" stroke-width="1"/><rect x="1824.5" y="586.5" width="36.5" height="5" fill="#a4b4cc"/><rect x="1866" y="576.5" width="38.5" height="21" rx="3" fill="#d0604c" stroke="#7a3028" stroke-width="1"/><rect x="1867" y="577.5" width="36.5" height="8" rx="2" fill="#e8a090"/><rect x="1793.5" y="587.5" width="13" height="4" fill="#ffffff" stroke="#606a78" stroke-width="1"/><rect x="1837.0" y="581.5" width="11" height="9" fill="none" stroke="#606a78" stroke-width="1"/><rect x="1838.0" y="582.5" width="9" height="7" fill="none" stroke="#ffffff" stroke-width="1.6"/><rect x="1840.0" y="585.0" width="5" height="2" fill="#606a78"/><path d="M1880.3,582.8 L1889.3,590.5 M1889.3,582.8 L1880.3,590.5" stroke="#606a78" stroke-width="5" stroke-linecap="round"/><path d="M1880.3,582.8 L1889.3,590.5 M1889.3,582.8 L1880.3,590.5" stroke="#ffffff" stroke-width="2.6" stroke-linecap="round"/>
<rect x="14" y="603" width="1891" height="380" fill="#c0c0c0"/>
<rect x="14" y="603" width="1891" height="1.2" fill="#606060"/><rect x="14" y="603" width="1.2" height="380" fill="#606060"/>
<g><polyline points="655,691 655,660 844.5,660" fill="none" stroke="#0000ff" stroke-width="1.6"/><polyline points="901.3,660 1444,660 1444,681.3" fill="none" stroke="#0000ff" stroke-width="1.6"/><polyline points="655,712 655,917.6" fill="none" stroke="#0000ff" stroke-width="1.6"/><polyline points="655,939 655,970 1444.4,970 1444.4,927" fill="none" stroke="#0000ff" stroke-width="1.6"/><polyline points="739.5,660 739.5,691" fill="none" stroke="#0000ff" stroke-width="1.6"/><polyline points="739.5,712 739.5,917.6" fill="none" stroke="#0000ff" stroke-width="1.6"/><polyline points="739.5,939 739.5,970" fill="none" stroke="#0000ff" stroke-width="1.6"/><polyline points="655,758.5 570,758.5 570,781" fill="none" stroke="#0000ff" stroke-width="1.6"/><polyline points="570,835 570,857 739.5,857" fill="none" stroke="#0000ff" stroke-width="1.6"/><polyline points="810,660 810,712" fill="none" stroke="#0000ff" stroke-width="1.6"/><polyline points="810,721 810,772 937,772 937,726.8" fill="none" stroke="#0000ff" stroke-width="1.6"/><polyline points="937,660 937,706.6" fill="none" stroke="#0000ff" stroke-width="1.6"/><polyline points="880.5,772 880.5,970" fill="none" stroke="#0000ff" stroke-width="1.6"/><polyline points="1008,660 1008,681.3" fill="none" stroke="#0000ff" stroke-width="1.6"/><polyline points="1008,736.4 1008,843.7" fill="none" stroke="#0000ff" stroke-width="1.6"/><polyline points="1092,660 1092,681.3" fill="none" stroke="#0000ff" stroke-width="1.6"/><polyline points="1092,736.4 1092,787" fill="none" stroke="#0000ff" stroke-width="1.6"/><polyline points="1008,787 1046.8,787" fill="none" stroke="#0000ff" stroke-width="1.6"/><polyline points="1053.5,787 1177,787 1276,886.5 1306.6,886.5" fill="none" stroke="#0000ff" stroke-width="1.6"/><polyline points="1145.3,886.5 1176.6,886.5 1276,787 1397,787" fill="none" stroke="#0000ff" stroke-width="1.6"/><polyline points="1405.4,787 1444.4,787" fill="none" stroke="#0000ff" stroke-width="1.6"/><polyline points="1444.4,737 1444.4,843.7" fill="none" stroke="#0000ff" stroke-width="1.6"/><polyline points="1360.5,660 1360.5,681.6" fill="none" stroke="#0000ff" stroke-width="1.6"/><polyline points="1360.5,737 1360.5,787" fill="none" stroke="#0000ff" stroke-width="1.6"/><polyline points="1008.6,927 1008.6,970" fill="none" stroke="#0000ff" stroke-width="1.6"/><polyline points="1049.5,886.5 1124.4,886.5" fill="none" stroke="#0000ff" stroke-width="1.6"/><polyline points="1328,886.5 1402,886.5" fill="none" stroke="#0000ff" stroke-width="1.6"/><polyline points="1092,886.5 1092,892.9" fill="none" stroke="#0000ff" stroke-width="1.6"/><polyline points="1092,949 1092,970" fill="none" stroke="#0000ff" stroke-width="1.6"/><polyline points="1360.5,886.5 1360.5,893" fill="none" stroke="#0000ff" stroke-width="1.6"/><polyline points="1360.5,949 1360.5,970" fill="none" stroke="#0000ff" stroke-width="1.6"/><path d="M640.6,691 L669.8000000000001,691 M655.2,691 L640.6,712 L669.8000000000001,712 Z" fill="none" stroke="#1a1a90" stroke-width="1.4"/><path d="M724.9,691 L754.1,691 M739.5,691 L724.9,712 L754.1,712 Z" fill="none" stroke="#1a1a90" stroke-width="1.4"/><path d="M640.6,917.6 L669.8000000000001,917.6 M655.2,917.6 L640.6,939 L669.8000000000001,939 Z" fill="none" stroke="#1a1a90" stroke-width="1.4"/><path d="M724.9,917.6 L754.1,917.6 M739.5,917.6 L724.9,939 L754.1,939 Z" fill="none" stroke="#1a1a90" stroke-width="1.4"/><path d="M919,711 L924,706.6 L950,706.6 L955,702 M937,706.6 L923,726.8 L950.7,726.8 Z" fill="none" stroke="#1a1a90" stroke-width="1.4"/><circle cx="569.6" cy="807.8" r="27" fill="none" stroke="#1a1a90" stroke-width="1.4"/><path d="M565,789.5 L575,789.5 M570,784.5 L570,794.5 M565,826 L575,826" fill="none" stroke="#1a1a90" stroke-width="1.4"/><path d="M795,712 L824.3,712 M795,722.5 Q809.6,714 824.3,722.5 M817,698 L817,707 M812.5,702.5 L821.5,702.5" fill="none" stroke="#1a1a90" stroke-width="1.4"/><path d="M844.5,659.6 L851.8,646.6 L866.4,672.5 L880.2,646.6 L894.8,672.5 L901.3,659.6" fill="none" stroke="#1a1a90" stroke-width="1.4"/><path d="M864.5,844 L897,844 L880.5,857.5 Z" fill="none" stroke="#1a1a90" stroke-width="1.4"/><path d="M1008,681.3 L1022.5,687.5 L993.5,702.4 L1022.5,716.5 L993.5,730 L1008,736.4" fill="none" stroke="#1a1a90" stroke-width="1.4"/><path d="M1092,681.3 L1106.5,687.5 L1077.5,702.4 L1106.5,716.5 L1077.5,730 L1092,736.4" fill="none" stroke="#1a1a90" stroke-width="1.4"/><path d="M1360.5,681.6 L1374.2,687.5 L1346.8,702.3 L1374.2,716.2 L1346.8,730 L1360.5,737" fill="none" stroke="#1a1a90" stroke-width="1.4"/><path d="M1444.4,681.3 L1458.4,687.5 L1430.4,702.3 L1458.4,716.2 L1430.4,730 L1444.4,737" fill="none" stroke="#1a1a90" stroke-width="1.4"/><path d="M1092,892.9 L1106.8,899.4 L1077.2,913.2 L1106.8,927.7 L1077.2,942.2 L1092,949" fill="none" stroke="#1a1a90" stroke-width="1.4"/><path d="M1360.5,893 L1374.7,899.4 L1346.3,913.2 L1374.7,927.7 L1346.3,942.2 L1360.5,949" fill="none" stroke="#1a1a90" stroke-width="1.4"/><path d="M1046.8,771 L1046.8,801 M1057,771 Q1049,786 1057,801 M1031,780 L1040,780 M1035.5,775.5 L1035.5,784.5" fill="none" stroke="#1a1a90" stroke-width="1.4"/><path d="M1395.5,771.5 Q1403.5,786.5 1395.5,801.5 M1405.4,772 L1405.4,801.5 M1413,779.5 L1422,779.5 M1417.5,775 L1417.5,784" fill="none" stroke="#1a1a90" stroke-width="1.4"/><path d="M1008,843.7 L1049.5,870.4 M1049.5,856.7 L1049.5,914 M1049.5,901 L1008.6,927 M1026,910.1 L1032.5,916.7 L1008.6,927 Z" fill="none" stroke="#1a1a90" stroke-width="1.4"/><path d="M1444.4,843.7 L1402,870.4 M1402,856.7 L1402,914 M1402,901 L1444.4,927 M1427,910.1 L1420.5,916.7 L1444.4,927 Z" fill="none" stroke="#1a1a90" stroke-width="1.4"/><path d="M1124.4,871.2 L1124.4,899.4 M1124.4,886.5 L1145.3,871.2 L1145.3,899.4 Z" fill="none" stroke="#1a1a90" stroke-width="1.4"/><path d="M1306.6,871.2 L1306.6,899.4 L1328,886.5 Z M1328,871.2 L1328,899.4" fill="none" stroke="#1a1a90" stroke-width="1.4"/><rect x="735.3" y="655.8" width="8.4" height="8.4" fill="#0000ff"/><rect x="805.8" y="655.8" width="8.4" height="8.4" fill="#0000ff"/><rect x="932.8" y="655.8" width="8.4" height="8.4" fill="#0000ff"/><rect x="1003.8" y="655.8" width="8.4" height="8.4" fill="#0000ff"/><rect x="1087.8" y="655.8" width="8.4" height="8.4" fill="#0000ff"/><rect x="1356.3" y="655.8" width="8.4" height="8.4" fill="#0000ff"/><rect x="650.8" y="754.3" width="8.4" height="8.4" fill="#0000ff"/><rect x="876.3" y="767.8" width="8.4" height="8.4" fill="#0000ff"/><rect x="1003.8" y="782.8" width="8.4" height="8.4" fill="#0000ff"/><rect x="1087.8" y="782.8" width="8.4" height="8.4" fill="#0000ff"/><rect x="1356.3" y="782.8" width="8.4" height="8.4" fill="#0000ff"/><rect x="1440.2" y="782.8" width="8.4" height="8.4" fill="#0000ff"/><rect x="735.3" y="852.8" width="8.4" height="8.4" fill="#0000ff"/><rect x="1087.8" y="882.3" width="8.4" height="8.4" fill="#0000ff"/><rect x="1356.3" y="882.3" width="8.4" height="8.4" fill="#0000ff"/><rect x="735.3" y="965.8" width="8.4" height="8.4" fill="#0000ff"/><rect x="876.3" y="965.8" width="8.4" height="8.4" fill="#0000ff"/><rect x="1004.4" y="965.8" width="8.4" height="8.4" fill="#0000ff"/><rect x="1087.8" y="965.8" width="8.4" height="8.4" fill="#0000ff"/><rect x="1356.3" y="965.8" width="8.4" height="8.4" fill="#0000ff"/><text x="619.5999999999999" y="681.1" font-size="21" fill="#101010" font-weight="700" text-anchor="start" textLength="26.8" lengthAdjust="spacingAndGlyphs" >D3</text><text x="705.0" y="681.1" font-size="21" fill="#101010" font-weight="700" text-anchor="start" textLength="26.8" lengthAdjust="spacingAndGlyphs" >D4</text><text x="632.8" y="737.1" font-size="21" fill="#101010" font-weight="700" text-anchor="start" textLength="14.0" lengthAdjust="spacingAndGlyphs" >D</text><text x="717.8" y="737.1" font-size="21" fill="#101010" font-weight="700" text-anchor="start" textLength="14.0" lengthAdjust="spacingAndGlyphs" >D</text><text x="590.3" y="780.5" font-size="21" fill="#101010" font-weight="700" text-anchor="start" textLength="27.2" lengthAdjust="spacingAndGlyphs" >V1</text><text x="619.5999999999999" y="908.1" font-size="21" fill="#101010" font-weight="700" text-anchor="start" textLength="27.0" lengthAdjust="spacingAndGlyphs" >D5</text><text x="705.0" y="908.1" font-size="21" fill="#101010" font-weight="700" text-anchor="start" textLength="27.0" lengthAdjust="spacingAndGlyphs" >D6</text><text x="632.8" y="964.0" font-size="21" fill="#101010" font-weight="700" text-anchor="start" textLength="14.0" lengthAdjust="spacingAndGlyphs" >D</text><text x="717.8" y="964.0" font-size="21" fill="#101010" font-weight="700" text-anchor="start" textLength="14.0" lengthAdjust="spacingAndGlyphs" >D</text><text x="400.1" y="885.0" font-size="21" fill="#101010" font-weight="700" text-anchor="start" textLength="230.2" lengthAdjust="spacingAndGlyphs" >SINE(0 60 50 0 0 0 10)</text><text x="433.1" y="943.8" font-size="21" fill="#101010" font-weight="700" text-anchor="start" textLength="160.2" lengthAdjust="spacingAndGlyphs" >.tran 50 startup</text><text x="775.3" y="703.2" font-size="21" fill="#101010" font-weight="700" text-anchor="start" textLength="26.7" lengthAdjust="spacingAndGlyphs" >C3</text><text x="752.5999999999999" y="746.2" font-size="21" fill="#101010" font-weight="700" text-anchor="start" textLength="49.2" lengthAdjust="spacingAndGlyphs" >330μ</text><text x="857.8" y="642.5" font-size="21" fill="#101010" font-weight="700" text-anchor="start" textLength="28.2" lengthAdjust="spacingAndGlyphs" >R8</text><text x="853.0999999999999" y="692.7" font-size="21" fill="#101010" font-weight="700" text-anchor="start" textLength="37.2" lengthAdjust="spacingAndGlyphs" >5k6</text><text x="901.8" y="696.8" font-size="21" fill="#101010" font-weight="700" text-anchor="start" textLength="27.2" lengthAdjust="spacingAndGlyphs" >D7</text><text x="850.5999999999999" y="752.7" font-size="21" fill="#101010" font-weight="700" text-anchor="start" textLength="79.2" lengthAdjust="spacingAndGlyphs" >TDZV30</text><text x="930.0" y="759.2" font-size="21" fill="#2020d0" font-weight="700" text-anchor="start" textLength="38.7" lengthAdjust="spacingAndGlyphs" >33V</text><text x="1024.8" y="703.7" font-size="21" fill="#101010" font-weight="700" text-anchor="start" textLength="26.7" lengthAdjust="spacingAndGlyphs" >R1</text><text x="1024.8" y="735.5" font-size="21" fill="#101010" font-weight="700" text-anchor="start" textLength="37.7" lengthAdjust="spacingAndGlyphs" >10k</text><text x="1108.8" y="703.7" font-size="21" fill="#101010" font-weight="700" text-anchor="start" textLength="26.7" lengthAdjust="spacingAndGlyphs" >R2</text><text x="1108.8" y="735.5" font-size="21" fill="#101010" font-weight="700" text-anchor="start" textLength="49.7" lengthAdjust="spacingAndGlyphs" >820k</text><text x="1034.2" y="768.8" font-size="21" fill="#101010" font-weight="700" text-anchor="start" textLength="26.2" lengthAdjust="spacingAndGlyphs" >C1</text><text x="1036.8" y="820.7" font-size="21" fill="#101010" font-weight="700" text-anchor="start" textLength="23.2" lengthAdjust="spacingAndGlyphs" >1μ</text><text x="1377.5" y="703.0" font-size="21" fill="#101010" font-weight="700" text-anchor="start" textLength="26.7" lengthAdjust="spacingAndGlyphs" >R3</text><text x="1377.5" y="734.5" font-size="21" fill="#101010" font-weight="700" text-anchor="start" textLength="49.7" lengthAdjust="spacingAndGlyphs" >820k</text><text x="1461.6" y="703.0" font-size="21" fill="#101010" font-weight="700" text-anchor="start" textLength="26.2" lengthAdjust="spacingAndGlyphs" >R4</text><text x="1461.6" y="734.5" font-size="21" fill="#101010" font-weight="700" text-anchor="start" textLength="37.2" lengthAdjust="spacingAndGlyphs" >10k</text><text x="1387.3999999999999" y="768.3" font-size="21" fill="#101010" font-weight="700" text-anchor="start" textLength="26.2" lengthAdjust="spacingAndGlyphs" >C2</text><text x="1389.3999999999999" y="820.5" font-size="21" fill="#101010" font-weight="700" text-anchor="start" textLength="23.2" lengthAdjust="spacingAndGlyphs" >1μ</text><text x="929.5" y="858.9" font-size="21" fill="#2020d0" font-weight="700" text-anchor="start" textLength="70.2" lengthAdjust="spacingAndGlyphs" >ztx696</text><text x="986.0" y="880.3" font-size="21" fill="#101010" font-weight="700" text-anchor="start" textLength="26.2" lengthAdjust="spacingAndGlyphs" >Q1</text><text x="936.4" y="912.4" font-size="21" fill="#101010" font-weight="700" text-anchor="start" textLength="76.2" lengthAdjust="spacingAndGlyphs" >2N5550</text><text x="1119.8" y="867.3" font-size="21" fill="#101010" font-weight="700" text-anchor="start" textLength="26.2" lengthAdjust="spacingAndGlyphs" >D1</text><text x="1105.8" y="913.2" font-size="21" fill="#101010" font-weight="700" text-anchor="start" textLength="29.2" lengthAdjust="spacingAndGlyphs" >R5</text><text x="1094.5" y="920.0" font-size="21" fill="#101010" font-weight="700" text-anchor="start" textLength="76.7" lengthAdjust="spacingAndGlyphs" >1N4148</text><text x="1109.0" y="947.5" font-size="21" fill="#101010" font-weight="700" text-anchor="start" textLength="66.2" lengthAdjust="spacingAndGlyphs" >10Meg</text><text x="1303.1" y="867.3" font-size="21" fill="#101010" font-weight="700" text-anchor="start" textLength="27.7" lengthAdjust="spacingAndGlyphs" >D2</text><text x="1279.3999999999999" y="920.0" font-size="21" fill="#101010" font-weight="700" text-anchor="start" textLength="76.2" lengthAdjust="spacingAndGlyphs" >1N4148</text><text x="1377.2" y="916.2" font-size="21" fill="#101010" font-weight="700" text-anchor="start" textLength="26.2" lengthAdjust="spacingAndGlyphs" >R6</text><text x="1378.0" y="947.5" font-size="21" fill="#101010" font-weight="700" text-anchor="start" textLength="65.2" lengthAdjust="spacingAndGlyphs" >10Meg</text><text x="1458.2" y="852.1" font-size="21" fill="#2020d0" font-weight="700" text-anchor="start" textLength="70.2" lengthAdjust="spacingAndGlyphs" >ztx696</text><text x="1436.8" y="880.3" font-size="21" fill="#101010" font-weight="700" text-anchor="start" textLength="27.7" lengthAdjust="spacingAndGlyphs" >Q2</text><text x="1437.5" y="912.4" font-size="21" fill="#101010" font-weight="700" text-anchor="start" textLength="76.7" lengthAdjust="spacingAndGlyphs" >2N5550</text></g>
<rect x="0" y="995" width="1920" height="25" fill="#f8f8f8"/><rect x="0" y="997" width="1918" height="1" fill="#d4d4d4"/>
<text x="1.5" y="1015" font-size="14" fill="#303030" font-weight="400" text-anchor="start" textLength="198" lengthAdjust="spacingAndGlyphs" >x = 4.76s    y = 23.60V, -0.679A</text>
<g><rect x="0" y="1020" width="1920" height="60" fill="#1c1c1e"/><rect x="448" y="1036" width="13.5" height="13.5" rx="1" fill="#3cb4f0"/><rect x="463" y="1036" width="13.5" height="13.5" rx="1" fill="#3cb4f0"/><rect x="448" y="1051" width="13.5" height="13.5" rx="1" fill="#3cb4f0"/><rect x="463" y="1051" width="13.5" height="13.5" rx="1" fill="#3cb4f0"/><rect x="493.5" y="1030.5" width="274" height="40" rx="20" fill="#323234" stroke="#444" stroke-width="1"/><circle cx="516" cy="1049" r="6.5" fill="none" stroke="#e8e8e8" stroke-width="2"/><path d="M520.5,1053.5 L525,1058" stroke="#e8e8e8" stroke-width="2.2"/><text x="539.5" y="1056.8" font-size="17" fill="#e4e4e4" font-weight="400" text-anchor="start" textLength="41.5" lengthAdjust="spacingAndGlyphs" >Cerca</text><path d="M787,1039 L793,1035.5 L805,1035.5 L811,1039 L810,1044 L811.5,1048 L807,1060 L799,1064.5 L791,1060 L786.5,1048 L788,1044 Z" fill="#f5501e"/><path d="M791,1045 L795,1041 L803,1041 L807,1045 L806,1051 L803,1054 L801,1058 L797,1058 L795,1054 L792,1051 Z" fill="#fff"/><path d="M795,1048 L798,1049 M804,1048 L801,1049 M797,1054 L801,1054" stroke="#f5501e" stroke-width="1.3"/><path d="M839,1039 Q839,1037 841,1037 L849,1037 L852,1040 L867,1040 Q869,1040 869,1042 L869,1063 L839,1063 Z" fill="#f0bc38"/><rect x="839" y="1043" width="30" height="20" fill="#fad25a"/><rect x="844" y="1056" width="20" height="7.5" rx="1" fill="#1a7ad8"/><circle cx="908.5" cy="1050.5" r="13.5" fill="#ff6a2a"/><path d="M895.5,1047 Q897,1037 906,1036 Q913,1035.5 917,1040 Q920,1035 918,1033.5 Q925,1040 922,1052 Z" fill="#ffb02a"/><circle cx="908" cy="1051" r="7.5" fill="#6e3ad0"/><path d="M900,1046 Q905,1041 912,1044 Q906,1045 905,1049 Z" fill="#ff8a30"/><rect x="904.5" y="1069.5" width="8" height="3" rx="1.5" fill="#9a9a9a"/><circle cx="964" cy="1049.5" r="13.5" fill="#fff"/><path d="M956,1044 L963.5,1044 L960,1058 L955,1058 Z" fill="#2a70d0"/><path d="M965,1044 L972,1044 L972,1058 L967,1058 Z" fill="#2a70d0"/><path d="M956,1043 Q962,1038 970,1042" stroke="#30a050" stroke-width="2.5" fill="none"/><path d="M960.5,1058 L963,1049 M968.5,1047 L968.5,1058" stroke="#1a3050" stroke-width="1.5"/><path d="M1005.5,1050 Q1005,1036 1020,1036 Q1033,1037 1032.5,1050 Q1032,1058 1025,1056 Q1020,1054 1019,1060 Q1018,1065 1012,1063 Q1005.5,1060 1005.5,1050 Z" fill="#44aee8"/><circle cx="1009.5" cy="1050.5" r="2.8" fill="#e04020"/><circle cx="1012.3" cy="1044.3" r="2.8" fill="#40a830"/><circle cx="1019.3" cy="1041.3" r="2.8" fill="#f0b020"/><circle cx="1019" cy="1052" r="1.8" fill="#1c1c1e"/><path d="M1026.5,1049 L1026.5,1065" stroke="#c07828" stroke-width="2.4"/><path d="M1023.5,1046 L1029.5,1046 L1028,1050 L1025,1050 Z" fill="#e8c890"/><path d="M1060,1047 L1070,1043 L1084,1043.5 L1088,1046.5 L1083,1053 L1066,1058.5 L1062,1056 Z" fill="#e8e4e8"/><path d="M1067,1053 L1083,1049" stroke="#8a8a8a" stroke-width="1"/><path d="M1136,1039 L1138.5,1039 L1138.5,1058 L1136,1058 Z" fill="#b0b0b0"/><path d="M1128,1044 L1136,1039.5 L1136,1057.5 L1128,1053 Z" fill="#10d050"/><rect x="1123" y="1044.5" width="5" height="8" fill="#20f0d0"/><path d="M1123,1048 L1118,1048 L1118,1055 L1123,1055" fill="none" stroke="#a0a0a0" stroke-width="1.4"/><rect x="1159" y="1025" width="50" height="50" rx="5" fill="#2e2e30"/><g transform="translate(1164.9,1028.8) scale(1.55)"><path d="M7,7 L2.5,4 L2.5,23.5 L17.5,13.5" fill="none" stroke="#000" stroke-width="1.5" stroke-linejoin="round"/><path d="M9,5 L11,5 L7.5,11.8 L13,11.8 L12.5,13.8 L4,13.8 Z" fill="#a00000"/><path d="M12,5 L21,4.3 L19.3,7.8 L18.5,8 L16.5,13.3 L14,13.3 L15.8,8 L13.5,8 Z" fill="#a00000"/><path d="M21,4.3 L18.8,8 L17,13.5" fill="none" stroke="#000" stroke-width="1"/></g><rect x="1174" y="1071" width="19" height="4" rx="2" fill="#4cc2ff"/><rect x="1224" y="1035" width="30.3" height="29.6" fill="#4e5e6e"/><rect x="1224" y="1035" width="30.3" height="14" fill="#5a6878"/><text x="1224" y="1050" font-size="14.5" fill="#f4f4f4" font-weight="400" text-anchor="start" textLength="33" lengthAdjust="spacingAndGlyphs" clip-path="url(#logoclip)">LOGO</text><text x="1237" y="1063.5" font-size="15" fill="#a8b4c0" font-weight="700" text-anchor="start" >V8</text><defs><clipPath id="logoclip"><rect x="1224" y="1035" width="30.3" height="30"/></clipPath></defs><rect x="1282.4" y="1035" width="22.6" height="29.6" rx="2" fill="#7e868e"/><rect x="1285" y="1038" width="17.5" height="5" fill="#50d0f0"/><rect x="1285.0" y="1045.5" width="4.8" height="4.8" fill="#e4e8ec"/><rect x="1285.0" y="1051.5" width="4.8" height="4.8" fill="#e4e8ec"/><rect x="1285.0" y="1057.5" width="4.8" height="4.8" fill="#e4e8ec"/><rect x="1291.1" y="1045.5" width="4.8" height="4.8" fill="#e4e8ec"/><rect x="1291.1" y="1051.5" width="4.8" height="4.8" fill="#e4e8ec"/><rect x="1291.1" y="1057.5" width="4.8" height="4.8" fill="#e4e8ec"/><rect x="1297.2" y="1045.5" width="4.8" height="4.8" fill="#e4e8ec"/><rect x="1297.2" y="1051.5" width="4.8" height="10.8" fill="#1a4a98"/><rect x="1334.5" y="1035.7" width="29.5" height="26.8" rx="5" fill="#f8f000"/><text x="1335" y="1050" font-size="13.5" fill="#000" font-weight="400" text-anchor="start" textLength="27" lengthAdjust="spacingAndGlyphs" >Fido</text><text x="1335" y="1062" font-size="13.5" fill="#000" font-weight="400" text-anchor="start" textLength="27" lengthAdjust="spacingAndGlyphs" >CAD</text><path d="M1393.5,1035.7 L1409,1035.7 L1415.3,1042 L1415.3,1063.9 L1393.5,1063.9 Z" fill="#f4f4f6"/><path d="M1409,1035.7 L1409,1042 L1415.3,1042" fill="#d8d8dc"/><path d="M1445.6,1048 L1452,1041.5 L1464,1041.5 L1468.8,1048 L1467,1058.2 L1448,1058.2 Z" fill="#d0d8e8"/><path d="M1445.6,1048 L1468.8,1048" stroke="#8898b0" stroke-width="1"/><text x="1450" y="1056" font-size="9" fill="#3040a0">λ</text><text x="1460" y="1056" font-size="9" fill="#207040">λ</text><path d="M1611.5,1053.5 L1618.2,1046.8 L1625,1053.5" fill="none" stroke="#fff" stroke-width="1.6"/><path d="M1648.4,1050 Q1649,1041 1657,1040.5 Q1663,1040.5 1665.8,1045" fill="none" stroke="#f0f0f0" stroke-width="1.5"/><path d="M1667,1040 L1667,1045.6 L1661.5,1045.6" fill="none" stroke="#f0f0f0" stroke-width="1.5"/><path d="M1658,1059.4 Q1652,1059.5 1649.5,1055" fill="none" stroke="#f0f0f0" stroke-width="1.5"/><path d="M1649,1059.5 L1649,1054.3 L1654.5,1054.3" fill="none" stroke="#f0f0f0" stroke-width="1.5"/><circle cx="1663" cy="1055" r="5" fill="#1a7ae0"/><path d="M1688.5,1048.5 Q1698,1040 1707.5,1048.5" fill="none" stroke="#555" stroke-width="1.4"/><path d="M1691,1051.3 Q1698,1044.5 1705,1051.3" fill="none" stroke="#f4f4f4" stroke-width="1.6"/><path d="M1693.8,1054 Q1698,1050 1702.2,1054" fill="none" stroke="#f4f4f4" stroke-width="1.6"/><circle cx="1698" cy="1055.5" r="1.7" fill="#fff"/><path d="M1718.4,1047 L1721,1047 L1726.4,1043 L1726.4,1056.8 L1721,1053.5 L1718.4,1053.5 Z" fill="none" stroke="#f4f4f4" stroke-width="1.4" stroke-linejoin="round"/><path d="M1729,1046.5 Q1731,1050 1729,1053.5" fill="none" stroke="#f0f0f0" stroke-width="1.4"/><path d="M1732.5,1043.5 Q1736.5,1050 1732.5,1056.5" fill="none" stroke="#5a5a5a" stroke-width="1.3"/><rect x="1749" y="1044.4" width="16.5" height="11.3" rx="2" fill="none" stroke="#f4f4f4" stroke-width="1.4"/><rect x="1765.8" y="1048" width="2" height="4" fill="#f4f4f4"/><path d="M1748.5,1055.5 Q1747,1048 1750,1044 Q1752,1041.5 1754,1040.5 Q1755.5,1046 1753,1050 Q1751,1053 1748.5,1055.5 Z" fill="#f4f4f4"/><text x="1830.5" y="1045.3" font-size="15" fill="#f4f4f4" font-weight="400" text-anchor="start" textLength="34.5" lengthAdjust="spacingAndGlyphs" >10:34</text><text x="1788.5" y="1064.8" font-size="15" fill="#f4f4f4" font-weight="400" text-anchor="start" textLength="76.5" lengthAdjust="spacingAndGlyphs" >09/02/2025</text><path d="M1878,1056.5 L1880,1053 L1880,1049 Q1880,1043.5 1886,1043.5 Q1891.5,1043.5 1891.5,1049 L1891.5,1053 L1893.5,1056.5 Z" fill="#f0f0f0"/><path d="M1883.5,1058 Q1886,1060.5 1888.5,1058 Z" fill="#f0f0f0"/><text x="1882" y="1054" font-size="9" font-weight="700" fill="#1c1c1e">z</text><text x="1888" y="1046" font-size="9" font-weight="700" fill="#f0f0f0">z</text></g>
</svg></body></html>
